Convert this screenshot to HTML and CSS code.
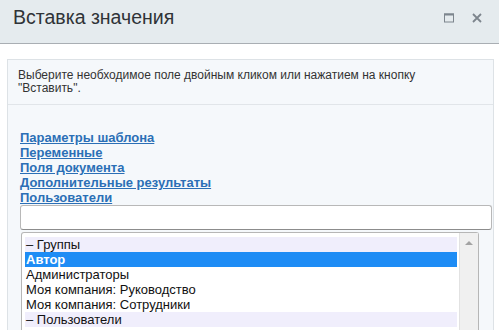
FILE: index.html
```html
<!DOCTYPE html>
<html>
<head>
<meta charset="utf-8">
<link rel="stylesheet" href="styles.css">
</head>
<body>
<div class="dialog">
  <div class="header">
    <span class="title">Вставка значения</span>
    <span class="icons">
      <svg class="ico" width="10" height="10" viewBox="0 0 10 10"><rect x="0.5" y="1" width="9" height="8" fill="none" stroke="#7d858d" stroke-width="1"/><rect x="0" y="0.5" width="10" height="2" fill="#7d858d"/></svg>
      <svg class="ico" width="10" height="10" viewBox="0 0 10 10"><path d="M1 1 L9 9 M9 1 L1 9" stroke="#7d858d" stroke-width="1.8"/></svg>
    </span>
  </div>
  <div class="content">
    <div class="panel">
      <div class="note">Выберите необходимое поле двойным кликом или нажатием на кнопку "Вставить".</div>
      <div class="links">
        <a class="link" href="#">Параметры шаблона</a>
        <a class="link" href="#">Переменные</a>
        <a class="link" href="#">Поля документа</a>
        <a class="link" href="#">Дополнительные результаты</a>
        <a class="link" href="#">Пользователи</a>
      </div>
      <div class="search"></div>
      <div class="listbox">
        <div class="options">
          <div class="opt group">– Группы</div>
          <div class="opt selected">Автор</div>
          <div class="opt">Администраторы</div>
          <div class="opt">Моя компания: Руководство</div>
          <div class="opt">Моя компания: Сотрудники</div>
          <div class="opt group">– Пользователи</div>
        </div>
        <div class="scrollbar"><span class="arrow"></span></div>
      </div>
    </div>
  </div>
</div>
</body>
</html>
```
FILE: styles.css
```css
html, body { margin: 0; padding: 0; background: #fff; }
body { font-family: "Liberation Sans", Arial, sans-serif; color: #333; width: 499px; height: 330px; overflow: hidden; }
.header {
  background: #e5ebee;
  border-bottom: 1px solid #a9aeb3;
  display: flex;
  align-items: center;
  padding-left: 13px;
  box-sizing: border-box;
  height: 44px;
}
.title { font-size: 19.5px; color: #2f3337; flex: 1; margin-top: -9px; }
.icons { display: flex; gap: 18px; margin-right: 17px; margin-top: -7px; }
.ico { display: block; }
.content { padding: 15px 5px 0 7px; }
.panel {
  border: 1px solid #dde2e6;
  border-bottom: none;
  background: #f5f8fb;
  height: 280px;
}
.note {
  font-size: 12px;
  line-height: 13px;
  color: #333;
  padding: 9px 60px 0 10px;
  height: 35px;
  border-bottom: 1px solid #e1e5e9;
}
.links { padding: 25px 0 0 12px; display: flex; flex-direction: column; }
.link {
  font-size: 13px;
  font-weight: bold;
  line-height: 15px;
  color: #2b6fb6;
  text-decoration: underline;
  align-self: flex-start;
}
.search {
  margin-left: 12px;
  margin-right: 1px;
  height: 23px;
  background: #fff;
  border: 1px solid #b8b8b8;
  border-bottom-color: #8c8c8c;
  border-radius: 3px;
}
.listbox {
  margin: 2px 0 0 13px;
  width: 458px;
  height: 100px;
  background: #fff;
  border: 1px solid #b6b6b6;
  border-bottom: none;
  border-radius: 3px 3px 0 0;
  display: flex;
  box-sizing: border-box;
}
.options { flex: 1; padding: 4px 0 0 3px; }
.opt {
  font-size: 13px;
  line-height: 15px;
  height: 15px;
  color: #111;
  padding-left: 1px;
}
.opt.group { background: #f0eefc; }
.opt.selected { background: #1e8cf5; color: #fff; font-weight: bold; }
.scrollbar {
  width: 18px;
  margin-left: 2px;
  background: #f0f0f0;
  border-left: 1px solid #e2e2e2;
  position: relative;
}
.arrow {
  position: absolute;
  left: 5px;
  top: 8px;
  width: 0; height: 0;
  border-left: 4px solid transparent;
  border-right: 4px solid transparent;
  border-bottom: 4px solid #a3a3a3;
}
```
